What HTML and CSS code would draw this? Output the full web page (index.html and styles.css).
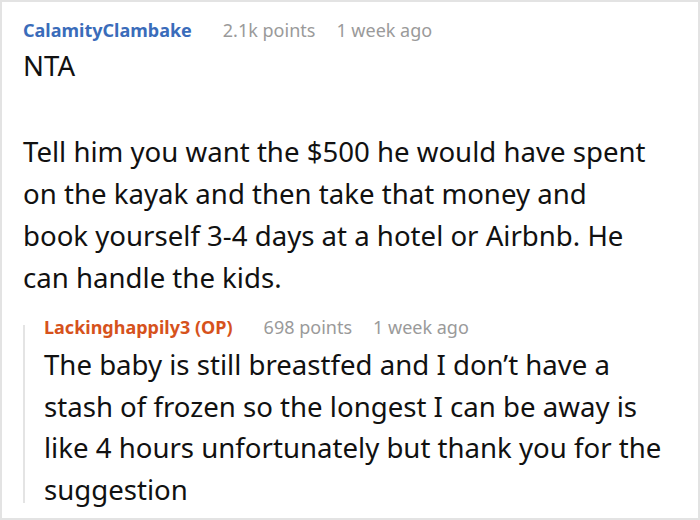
FILE: index.html
```html
<!DOCTYPE html>
<html>
<head>
<meta charset="utf-8">
<link rel="stylesheet" href="styles.css">
</head>
<body>
<div class="frame">
  <div class="comment">
    <div class="meta">
      <span class="user user-blue">CalamityClambake</span>
      <span class="points">2.1k points</span>
      <span class="time">1 week ago</span>
    </div>
    <div class="body parent-body">
      <p>NTA</p>
      <p>Tell him you want the $500 he would have spent on the kayak and then take that money and book yourself 3-4 days at a hotel or Airbnb. He can handle the kids.</p>
    </div>
    <div class="reply">
      <div class="meta">
        <span class="user user-orange">Lackinghappily3 (OP)</span>
        <span class="points">698 points</span>
        <span class="time">1 week ago</span>
      </div>
      <div class="body reply-body">
        <p>The baby is still breastfed and I don’t have a stash of frozen so the longest I can be away is like 4 hours unfortunately but thank you for the suggestion</p>
      </div>
    </div>
  </div>
</div>
</body>
</html>
```

FILE: styles.css
```css
html, body {
  margin: 0;
  padding: 0;
  background: #fff;
}
.frame {
  width: 700px;
  height: 520px;
  box-sizing: border-box;
  border: 2px solid #e3e3e3;
  overflow: hidden;
  font-family: "Noto Sans", "Open Sans", sans-serif;
  color: #111;
}
.comment {
  padding: 15px 32px 0 21px;
}
.meta {
  font-size: 18px;
  line-height: 26px;
  display: flex;
  align-items: baseline;
  white-space: nowrap;
}
.user {
  font-weight: bold;
}
.user-blue { color: #3a6cba; }
.user-orange { color: #d6521c; }
.points {
  color: #9a9a9a;
  margin-left: 31px;
}
.time {
  color: #9a9a9a;
  margin-left: 21px;
}
.body {
  font-size: 27.6px;
  line-height: 41.5px;
}
.parent-body {
  line-height: 42px;
  margin-top: 1.2px;
  margin-right: 14px;
}
.body p {
  margin: 0 0 43.5px 0;
}
.body p:last-child {
  margin-bottom: 0;
}
.reply {
  position: relative;
  margin-top: 16.6px;
  padding-left: 21px;
}
.reply::before {
  content: "";
  position: absolute;
  left: 0;
  top: 11px;
  bottom: 8px;
  width: 2px;
  background: #e4e4e4;
}
.reply-body {
  margin-top: 3.6px;
  line-height: 41.8px;
}
```
